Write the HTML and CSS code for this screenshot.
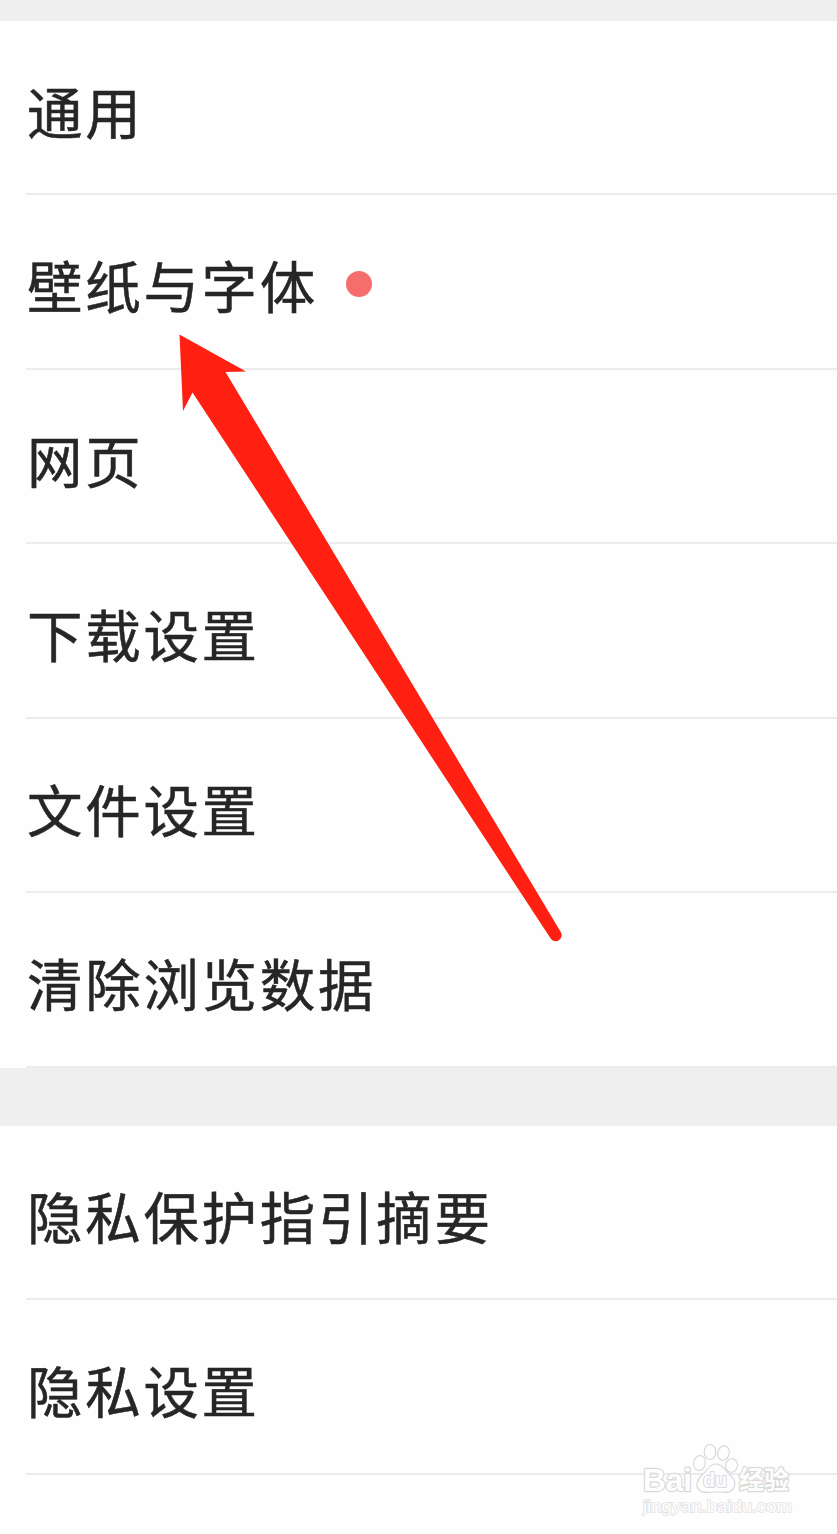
FILE: index.html
```html
<!DOCTYPE html>
<html lang="zh-CN">
<head>
  <meta charset="UTF-8">
  <title>设置</title>
  <link rel="stylesheet" href="styles.css">
</head>
<body>

  <div class="pagina">
    <ul class="lista">
      <li class="item">通用</li>
      <li class="item">壁纸与字体<span class="punto"></span></li>
      <li class="item">网页</li>
      <li class="item">下载设置</li>
      <li class="item">文件设置</li>
      <li class="item">清除浏览数据</li>
    </ul>
    <ul class="lista">
      <li class="item">隐私保护指引摘要</li>
      <li class="item">隐私设置</li>
    </ul>

    <svg class="flecha" viewBox="0 0 400 620">
      <path d="M9.5 4.5 L76 41.5 L55.5 42 L391 602.5 A6 6 0 0 1 381 609 L22.5 62.5 L13 81 Z"/>
    </svg>

    <svg class="marca" viewBox="0 0 170 90">
      <g class="trazo">
        <text class="logo" x="11" y="50.5" textLength="49" lengthAdjust="spacingAndGlyphs">Bai</text>
        <ellipse cx="67.500" cy="23" rx="5.800" ry="7.500" transform="rotate(10 67.5 23)"/>
        <ellipse cx="78" cy="12" rx="5.800" ry="7.500"/>
        <ellipse cx="91.500" cy="13" rx="5.800" ry="7.200" transform="rotate(12 91.5 13)"/>
        <ellipse cx="99.500" cy="25.500" rx="6" ry="6.800" transform="rotate(15 99.5 25.5)"/>
        <path d="M84 24 C91 24 92 30 98 35 C104 40 104 46 100 50 C96 54 90 52 84 52 C78 52 71 54 67 50 C63 46 65 39 71 34 C76 30 77 24 84 24 Z"/>
        <text class="du" x="71" y="46.500" textLength="24" lengthAdjust="spacingAndGlyphs">du</text>
        <text class="jingyan" x="107" y="48.500" textLength="50" lengthAdjust="spacingAndGlyphs">经验</text>
      </g>
      <text class="url" x="11" y="71.500" textLength="149" lengthAdjust="spacingAndGlyphs">jingyan.baidu.com</text>
    </svg>
  </div>

</body>
</html>
```
FILE: styles.css
```css
body {
  margin: 0;
  background-color: #efefef;
  font-family: "Noto Sans CJK SC", "Noto Sans", sans-serif;
  color: #262626;
}

.pagina {
  position: relative;
  box-sizing: border-box;
  height: 1534px;
  padding-top: 20.8px;
  overflow: hidden;
  display: flex;
  flex-direction: column;
  gap: 58px;
}

.lista {
  list-style: none;
  margin: 0;
  padding: 0 0 0 26px;
  background-color: #fefefe;
}

.lista:last-of-type {
  flex: 1;
}

.item {
  display: flex;
  align-items: center;
  box-sizing: border-box;
  height: 174.5px;
  padding: 5px 0 0 1px;
  border-bottom: 2px solid #ececec;
  font-size: 55.5px;
  line-height: 80px;
  letter-spacing: 2.7px;
  -webkit-text-stroke: 0.5px #262626;
}

.punto {
  width: 26px;
  height: 26px;
  margin: 0 0 1px 28px;
  border-radius: 50%;
  background-color: #f56e6c;
}

/* flecha roja sobre la lista */
.flecha {
  position: absolute;
  left: 170px;
  top: 330px;
  width: 400px;
  height: 620px;
  fill: #ff2012;
}

/* marca de agua */
.marca {
  position: absolute;
  left: 632px;
  top: 1440px;
  width: 170px;
  height: 90px;
}

.trazo {
  fill: #fefefe;
  stroke: #d9d9d9;
  stroke-width: 1.2;
}

.trazo text {
  paint-order: stroke;
  stroke-width: 2.4;
  stroke-linejoin: round;
}

.logo {
  font: bold 32px "Liberation Sans", Arial, sans-serif;
}

.trazo .du {
  font: bold 20px "Liberation Sans", Arial, sans-serif;
  stroke-width: 2;
}

.jingyan {
  font: 700 25px "Noto Sans CJK SC", sans-serif;
}

.url {
  font: 17px "Liberation Sans", Arial, sans-serif;
  fill: #fefefe;
  stroke: #e2e2e2;
  stroke-width: 1.6;
  paint-order: stroke;
}
```
